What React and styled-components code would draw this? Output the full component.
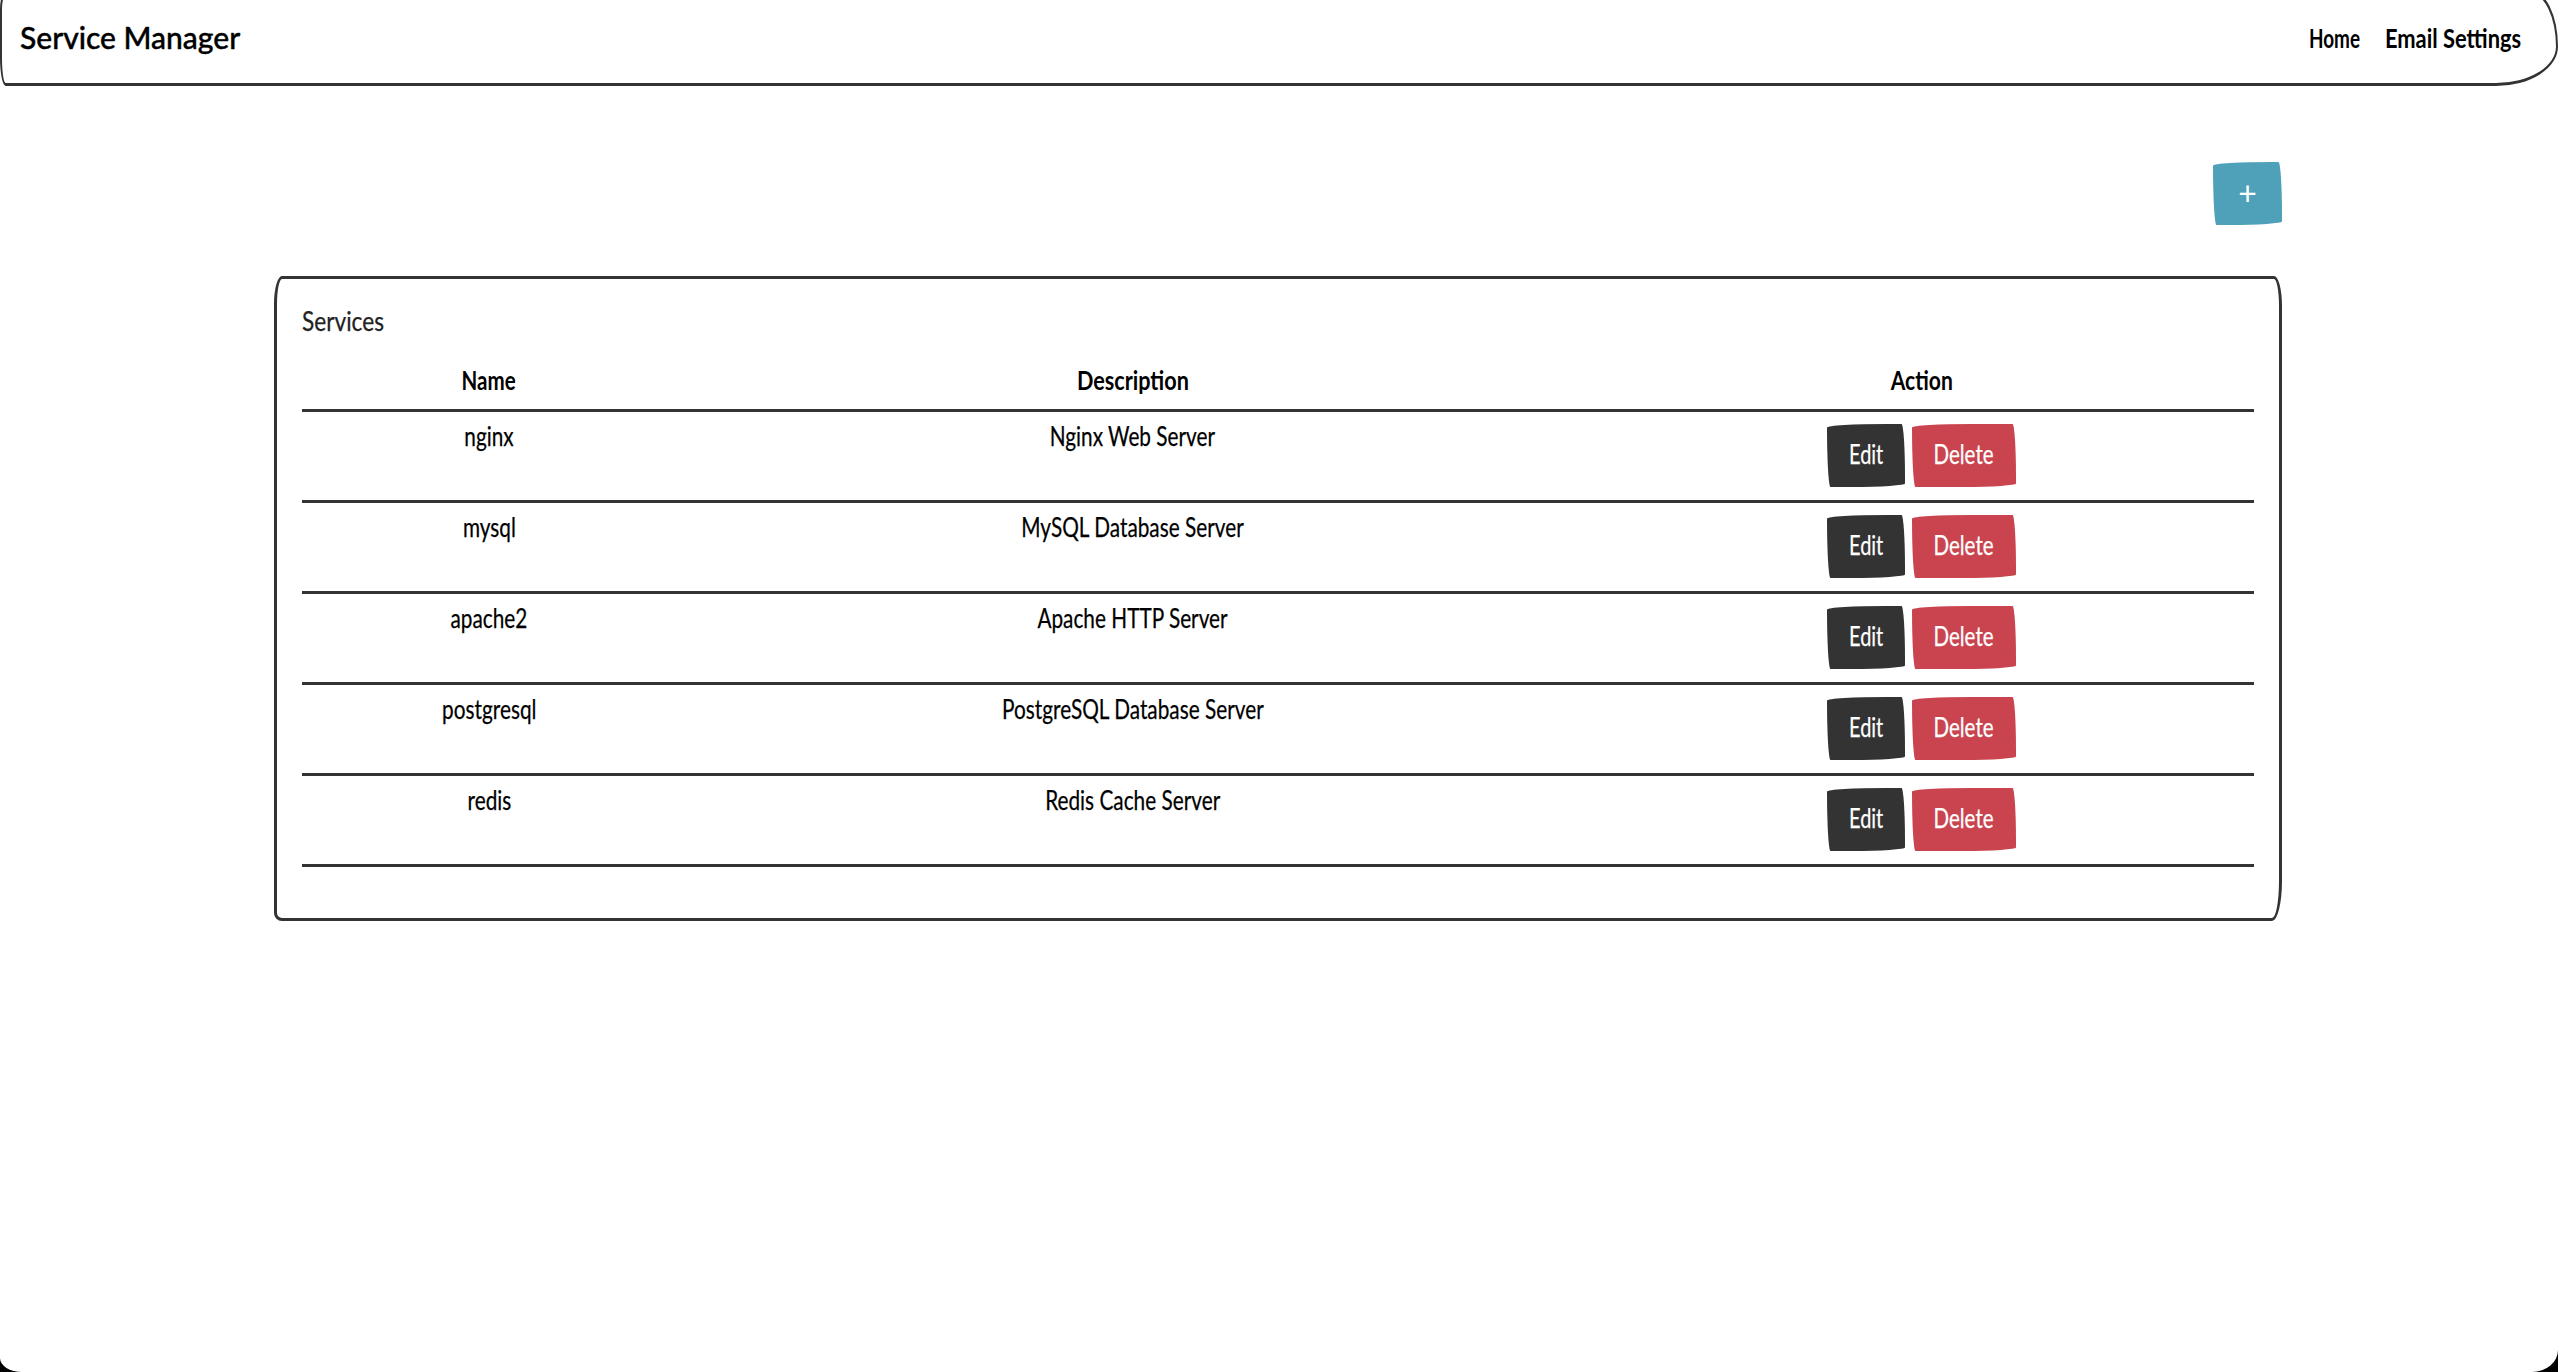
import React from "react";
import styled, { createGlobalStyle } from "styled-components";

const Global = createGlobalStyle`
  html { background: #000; }
  html, body { margin: 0; padding: 0; height: 1372px; overflow: hidden; }
  body {
    background: #fff;
    border-radius: 0 0 26px 22px / 0 0 22px 14px;
    font-family: "Lato", "Liberation Sans", sans-serif;
    color: #000;
  }
`;

const wobble = "255px 15px 225px 15px / 15px 225px 15px 255px";

const Nav = styled.nav`
  box-sizing: border-box;
  height: 96px;
  margin-top: -10px;
  padding: 0 34px 2px 18px;
  border: 3px solid #333;
  border-width: 3px 2px 3px 2px;
  border-radius: 8px 30px 66px 6px / 20px 60px 42px 30px;
  display: flex;
  align-items: center;
  justify-content: space-between;
`;

const Brand = styled.div`
  font-size: 30px;
  font-weight: 500;
  -webkit-text-stroke: 0.4px #000;
`;

const Links = styled.div`
  display: flex;
  gap: 25px;
  font-size: 27px;
  font-weight: 700;
`;

const NavLink = styled.a`
  width: ${(p) => p.$w}px;
  display: flex;
  justify-content: center;
  white-space: nowrap;
`;

const Squeeze = styled.span`
  display: inline-block;
  white-space: nowrap;
  flex: none;
  transform: scaleX(${(p) => p.$x});
  transform-origin: ${(p) => p.$origin || "center"};
`;

const Main = styled.main`
  width: 2008px;
  margin: 76px 0 0 274px;
  display: flex;
  flex-direction: column;
  align-items: flex-end;
`;

const Btn = styled.button`
  box-sizing: border-box;
  height: 63px;
  padding: 0 0 4px;
  width: ${(p) => p.$w}px;
  border: none;
  border-radius: ${wobble};
  background: ${(p) => p.$bg};
  color: #fff;
  font: inherit;
  font-size: 27px;
  -webkit-text-stroke: 0.25px #fff;
`;

const PlusBtn = styled(Btn)`
  padding-bottom: 3px;
  font-size: 32px;
  font-weight: 400;
  -webkit-text-stroke: 0;
`;

const Card = styled.section`
  box-sizing: border-box;
  width: 100%;
  height: 645px;
  margin-top: 51px;
  padding: 25px;
  border: 3px solid #333;
  border-radius: 8px 8px 10px 8px / 28px 30px 40px 8px;
`;

const Title = styled.h2`
  margin: 0;
  height: 43px;
  line-height: 34px;
  font-size: 27px;
  font-weight: 400;
  color: #222;
  -webkit-text-stroke: 0.25px #222;
`;

const Table = styled.table`
  width: 1952px;
  table-layout: fixed;
  border-collapse: collapse;
  font-size: 27px;
`;

const Th = styled.th`
  height: 63px;
  padding: 12px 0 8px;
  box-sizing: border-box;
  border-bottom: 3px solid #333;
  text-align: center;
  font-weight: 700;
  width: ${(p) => p.$w}px;
`;

const Td = styled.td`
  box-sizing: border-box;
  height: 91px;
  padding: 7px 0 0;
  border-bottom: 3px solid #333;
  text-align: center;
  vertical-align: top;
  -webkit-text-stroke: 0.25px #000;
`;

const Actions = styled.div`
  display: flex;
  justify-content: center;
  gap: 7px;
  padding-top: 5px;
`;

const services = [
  ["nginx", "Nginx Web Server"],
  ["mysql", "MySQL Database Server"],
  ["apache2", "Apache HTTP Server"],
  ["postgresql", "PostgreSQL Database Server"],
  ["redis", "Redis Cache Server"],
];

const X = 0.77;

export default function App() {
  return (
    <>
      <Global />
      <Nav>
        <Brand>Service Manager</Brand>
        <Links>
          <NavLink $w={51}><Squeeze $x={0.7}>Home</Squeeze></NavLink>
          <NavLink $w={137}><Squeeze $x={0.81}>Email Settings</Squeeze></NavLink>
        </Links>
      </Nav>
      <Main>
        <PlusBtn $w={69} $bg="#4ea1b9">+</PlusBtn>
        <Card>
          <Title><Squeeze $x={0.84} $origin="left">Services</Squeeze></Title>
          <Table>
            <thead>
              <tr>
                <Th $w={374}><Squeeze $x={0.76}>Name</Squeeze></Th>
                <Th $w={913}><Squeeze $x={0.8}>Description</Squeeze></Th>
                <Th $w={665}><Squeeze $x={0.78}>Action</Squeeze></Th>
              </tr>
            </thead>
            <tbody>
              {services.map(([n, d]) => (
                <tr key={n}>
                  <Td><Squeeze $x={X}>{n}</Squeeze></Td>
                  <Td><Squeeze $x={X}>{d}</Squeeze></Td>
                  <Td>
                    <Actions>
                      <Btn $w={78} $bg="#333333"><Squeeze $x={0.74}>Edit</Squeeze></Btn>
                      <Btn $w={104} $bg="#c9444f"><Squeeze $x={0.76}>Delete</Squeeze></Btn>
                    </Actions>
                  </Td>
                </tr>
              ))}
            </tbody>
          </Table>
        </Card>
      </Main>
    </>
  );
}
